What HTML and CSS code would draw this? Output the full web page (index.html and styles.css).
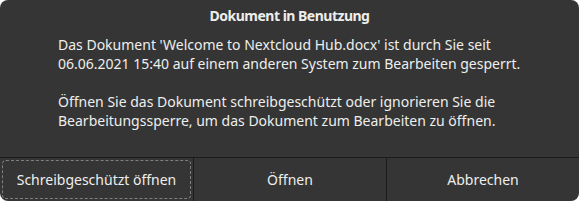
FILE: index.html
```html
<!DOCTYPE html>
<html lang="de">
<head>
<meta charset="utf-8">
<title>Dokument in Benutzung</title>
<link rel="stylesheet" href="styles.css">
</head>
<body>
<div class="dialog">
  <div class="title">Dokument in Benutzung</div>
  <div class="message">
    <p>Das Dokument 'Welcome to Nextcloud Hub.docx' ist durch Sie seit<br>06.06.2021 15:40 auf einem anderen System zum Bearbeiten gesperrt.</p>
    <p>Öffnen Sie das Dokument schreibgeschützt oder ignorieren Sie die<br>Bearbeitungssperre, um das Dokument zum Bearbeiten zu öffnen.</p>
  </div>
  <div class="buttons">
    <div class="btn"><span class="focus">Schreibgeschützt öffnen</span></div>
    <div class="btn">Öffnen</div>
    <div class="btn">Abbrechen</div>
  </div>
</div>
</body>
</html>
```
FILE: styles.css
```css
html, body {
  margin: 0;
  padding: 0;
  background: #ffffff;
}
.dialog {
  width: 579px;
  height: 201px;
  background: #353535;
  border-radius: 8px;
  display: flex;
  flex-direction: column;
  color: #eeeeec;
  font-family: "Noto Sans", "DejaVu Sans", sans-serif;
  font-size: 14px;
  overflow: hidden;
}
.title {
  flex-shrink: 0;
  text-align: center;
  font-weight: bold;
  letter-spacing: -0.5px;
  line-height: 19px;
  padding-top: 6px;
}
.message {
  flex-shrink: 0;
  padding: 10px 0 0 58px;
  line-height: 19px;
  white-space: nowrap;
}
.message p {
  margin: 0 0 19px 0;
}
.message p:last-child {
  margin-bottom: 0;
}
.buttons {
  flex-shrink: 0;
  margin-top: auto;
  border-top: 1px solid #1c1c1c;
  display: grid;
  grid-template-columns: 193px 193px 193px;
  height: 43px;
}
.btn {
  display: flex;
  align-items: center;
  justify-content: center;
  border-left: 1px solid #1c1c1c;
  position: relative;
}
.btn:first-child {
  border-left: none;
}
.focus::after {
  content: "";
  position: absolute;
  left: 2px;
  top: 2px;
  right: 2px;
  bottom: 2px;
  border: 1px dashed #808080;
  border-radius: 4px;
}
```
